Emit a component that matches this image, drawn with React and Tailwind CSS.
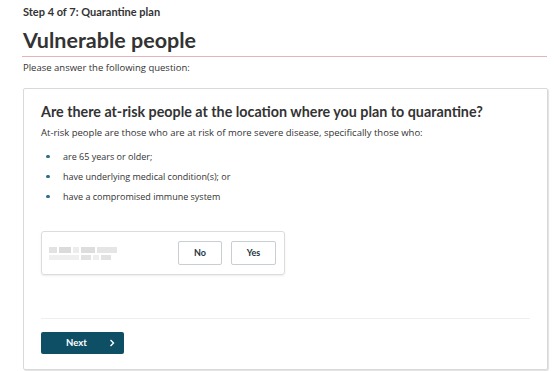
export default function App() {
  const lato = { fontFamily: "Lato, 'Open Sans', sans-serif" };
  return (
    <div className="w-[554px] h-[371px] bg-white overflow-hidden text-[#333]" style={{ fontFamily: "'Open Sans', sans-serif" }}>
      <div className="pl-[23px] pr-[7px] pt-[5px]">
        <div className="text-[11px] font-bold leading-[14px] text-[#333]" style={lato}>Step 4 of 7: Quarantine plan</div>
        <h1 className="mt-[8px] text-[21.5px] font-bold leading-[26px] text-[#333]" style={lato}>Vulnerable people</h1>
        <div className="mt-[3px] h-px bg-[#e8b3b6] -ml-px" />
        <p className="mt-[5px] text-[9.5px] leading-[12px] text-[#333]">Please answer the following question:</p>
        <div className="mt-[14px] w-[525px] h-[282px] border border-[#d9d9d9] rounded-[2px] shadow-[1px_1px_1px_rgba(0,0,0,0.12)] px-[17px] pt-[13px]">
          <h2 className="text-[14.3px] font-bold leading-[20px] text-[#333]" style={lato}>Are there at-risk people at the location where you plan to quarantine?</h2>
          <p className="mt-[4px] text-[9.5px] leading-[13px] text-[#333]">At-risk people are those who are at risk of more severe disease, specifically those who:</p>
          <ul className="mt-[11px] flex flex-col gap-[7px]">
            {["are 65 years or older;", "have underlying medical condition(s); or", "have a compromised immune system"].map((t) => (
              <li key={t} className="flex items-center h-[13px] text-[9px] leading-[13px] text-[#333]">
                <span className="ml-[5px] w-[3.5px] h-[3.5px] rounded-full bg-[#2a6f8c]" />
                <span className="ml-[13.5px]">{t}</span>
              </li>
            ))}
          </ul>
          <div className="mt-[28px] w-[244px] h-[44px] border border-[#dcdcdc] rounded-[3px] shadow-[0_1px_2px_rgba(0,0,0,0.08)] flex items-center pl-[7px] pr-[8px]">
            <div className="flex flex-col gap-[2px] opacity-60">
              <div className="flex gap-[2px]">
                <span className="w-[8px] h-[6px] bg-[#d0d0d0]" />
                <span className="w-[12px] h-[6px] bg-[#c4c4c4]" />
                <span className="w-[6px] h-[6px] bg-[#e0e0e0]" />
                <span className="w-[14px] h-[6px] bg-[#c8c8c8]" />
                <span className="w-[20px] h-[6px] bg-[#d4d4d4]" />
              </div>
              <div className="flex gap-[2px]">
                <span className="w-[30px] h-[5px] bg-[#e6e6e6]" />
                <span className="w-[10px] h-[5px] bg-[#d0d0d0]" />
                <span className="w-[6px] h-[5px] bg-[#e4e4e4]" />
                <span className="w-[10px] h-[5px] bg-[#cfcfcf]" />
              </div>
            </div>
            <div className="ml-auto flex gap-[9px]">
              <button className="w-[44px] h-[24px] border border-[#c9ced3] rounded-[2px] bg-white text-[9px] font-bold text-[#1d3340]" style={lato}>No</button>
              <button className="w-[45px] h-[24px] border border-[#c9ced3] rounded-[2px] bg-white text-[9px] font-bold text-[#1d3340]" style={lato}>Yes</button>
            </div>
          </div>
          <div className="mt-[43px] w-[489px] h-px bg-[#efefef]" />
          <button className="mt-[13px] w-[83px] h-[22px] bg-[#0f4f66] rounded-[2px] flex items-center text-white text-[9.5px] font-bold" style={lato}>
            <span className="ml-[25px]">Next</span>
            <svg className="ml-[22px]" width="6" height="8" viewBox="0 0 6 8" fill="none">
              <path d="M1.5 1 L4.5 4 L1.5 7" stroke="white" strokeWidth="1.4" />
            </svg>
          </button>
        </div>
      </div>
    </div>
  );
}
